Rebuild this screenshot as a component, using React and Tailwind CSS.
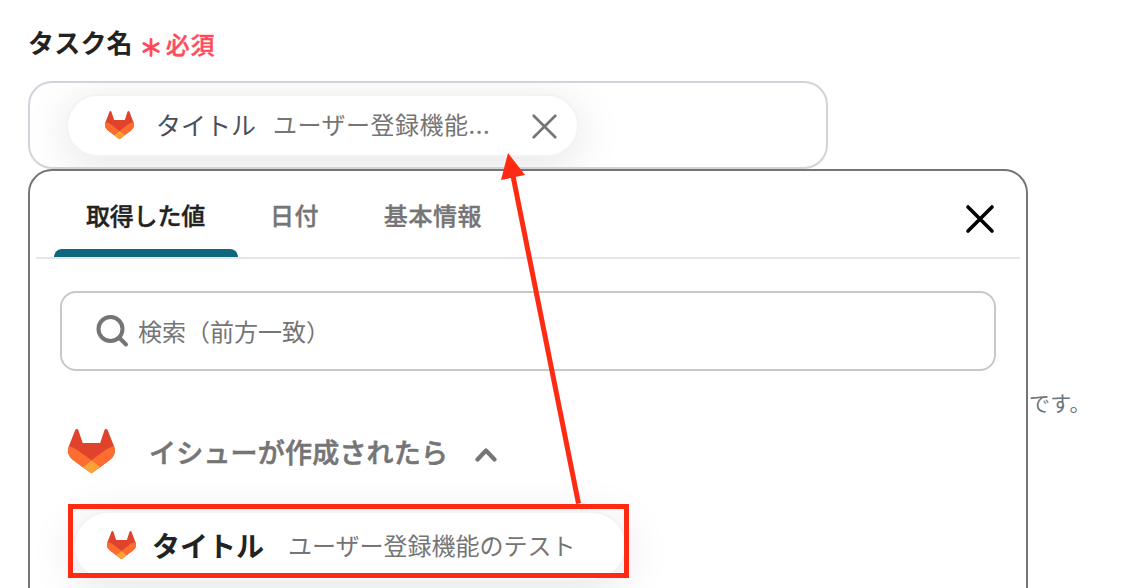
import { useState } from 'react';

const tabs = [
  { id: 'values', label: '取得した値', className: 'ml-[58px] tracking-[-0.2px]' },
  { id: 'date', label: '日付', className: 'ml-[65px] tracking-[0.4px]' },
  { id: 'basic', label: '基本情報', className: 'ml-[65px] tracking-[0.6px]' },
];

function GitlabLogo({ className }) {
  return (
    <svg className={className} viewBox="0 0 25 24" preserveAspectRatio="none" fill="none">
      <path fill="#E0432C" d="m24.507 9.5-.034-.09L21.082.562a.896.896 0 0 0-1.694.091l-2.29 7.01H7.825L5.535.653a.898.898 0 0 0-1.694-.09L.451 9.411.416 9.5a6.297 6.297 0 0 0 2.09 7.278l.012.01.03.022 5.16 3.867 2.56 1.935 1.554 1.176a1.051 1.051 0 0 0 1.268 0l1.555-1.176 2.56-1.935 5.197-3.89.014-.01A6.297 6.297 0 0 0 24.507 9.5Z" />
      <path fill="#FC6D2F" d="m24.507 9.5-.034-.09a11.44 11.44 0 0 0-4.56 2.051l-7.447 5.632 4.742 3.584 5.197-3.89.014-.01A6.297 6.297 0 0 0 24.507 9.5Z" />
      <path fill="#FBA336" d="m7.707 20.677 2.56 1.935 1.555 1.176a1.051 1.051 0 0 0 1.268 0l1.555-1.176 2.56-1.935-4.743-3.584-4.755 3.584Z" />
      <path fill="#FC6D2F" d="M5.01 11.461a11.43 11.43 0 0 0-4.56-2.05L.416 9.5a6.297 6.297 0 0 0 2.09 7.278l.012.01.03.022 5.16 3.867 4.745-3.584-7.444-5.632Z" />
    </svg>
  );
}

function CloseIcon({ className, strokeWidth }) {
  return (
    <svg className={className} viewBox="0 0 30 30" fill="none" stroke="currentColor" strokeWidth={strokeWidth} strokeLinecap="round">
      <path d="M3 3 27 27M27 3 3 27" />
    </svg>
  );
}

export default function App() {
  const [activeTab, setActiveTab] = useState('values');

  return (
    <div className="relative h-[588px] w-[1124px] overflow-hidden bg-white pl-7 font-['Noto_Sans_CJK_JP',sans-serif]">
      <div className="flex h-[81px] items-center pt-[4px]">
        <label className="-mt-px text-[26px] leading-[38px] font-bold tracking-[0.2px] text-[#222]">タスク名</label>
        <svg className="mt-[10px] ml-[9px] h-[19px] w-[18px]" viewBox="0 0 18 19" stroke="#ff4b5c" strokeWidth="2.8" strokeLinecap="round">
          <path d="M9 1.5v16M1.8 5.5l14.4 8M16.2 5.5l-14.4 8" />
        </svg>
        <span className="mt-[2px] ml-[6px] text-[24px] leading-[36px] font-medium tracking-[0.8px] text-[#ff4b5c] [-webkit-text-stroke:0.4px]">必須</span>
      </div>

      <div className="h-[88px] w-[800px] overflow-hidden rounded-[24px] border-2 border-[#ced4da] pt-[11px] pl-[36px]">
        <div className="flex h-[63px] w-[513px] items-center rounded-full border-2 border-[#f3f3f3] bg-white pl-[37px] shadow-[0_8px_48px_rgba(0,0,0,0.11)]">
          <GitlabLogo className="-mt-px h-[28px] w-[29px] shrink-0" />
          <span className="-mt-[3px] ml-[22px] text-[25px] leading-[38px] text-[#495057]">タイトル</span>
          <span className="-mt-[3px] ml-[17px] text-[24px] leading-[36px] tracking-[0.5px] text-[#757575]">ユーザー登録機能...</span>
          <button type="button" className="mt-px mr-[19px] ml-auto">
            <CloseIcon className="h-[27px] w-[27px] text-[#757575]" strokeWidth={3} />
          </button>
        </div>
      </div>

      <div className="flex">
        <div className="h-[460px] w-[1000px] shrink-0 rounded-t-[24px] border-2 border-[#757575] bg-white">
          <div className="mx-[6px] flex h-[88px] border-b-2 border-[#e5e5e5]">
            <div className="flex">
              {tabs.map((tab) => (
                <button
                  key={tab.id}
                  type="button"
                  onClick={() => setActiveTab(tab.id)}
                  className={`relative flex pt-[26px] text-[24px] leading-[36px] font-medium [-webkit-text-stroke:0.4px] first:ml-[50px] ${tab.className} ${
                    activeTab === tab.id ? 'text-[#222]' : 'text-[#757575]'
                  }`}
                >
                  {tab.label}
                  {activeTab === tab.id && (
                    <span className="absolute -right-[33px] bottom-0 -left-8 h-2 rounded-t-[8px] bg-[#0e6780]"></span>
                  )}
                </button>
              ))}
            </div>
            <button type="button" className="mt-[10px] mr-[25px] ml-auto">
              <CloseIcon className="h-[30px] w-[30px] text-black" strokeWidth={3.6} />
            </button>
          </div>

          <div className="mt-[32px] ml-[30px] flex h-[80px] w-[936px] items-center rounded-[16px] border-2 border-[#c8c8c8] pl-[34px]">
            <svg className="h-[34px] w-[34px]" viewBox="0 0 34 34" fill="none" stroke="#757575" strokeWidth="4" strokeLinecap="round">
              <circle cx="14.5" cy="15" r="12" />
              <path d="m23.5 24 6.5 6.5" />
            </svg>
            <span className="ml-[8px] text-[24px] leading-[36px] text-[#757575]">検索（前方一致）</span>
          </div>

          <div className="mt-[56px] ml-[38px] flex h-[48px] items-center">
            <GitlabLogo className="-mt-px h-[44px] w-[47px]" />
            <span className="mt-[2px] ml-[34px] text-[27px] leading-[40px] font-medium tracking-[0.2px] text-[#757575] [-webkit-text-stroke:0.6px]">イシューが作成されたら</span>
            <svg className="mt-[8px] ml-[27px] h-[16px] w-[22px]" viewBox="0 0 22 16" fill="none" stroke="#757575" strokeWidth="4.2" strokeLinecap="round" strokeLinejoin="round">
              <path d="m2.5 12.5 8.5-9 8.5 9" />
            </svg>
          </div>

          <div className="mt-[36px] ml-[43px] flex h-[70px] w-[554px] items-center rounded-full border-2 border-[#f3f3f3] bg-white pl-[32px] shadow-[0_8px_48px_rgba(0,0,0,0.11)]">
            <GitlabLogo className="-mt-[3px] h-[28px] w-[29px] shrink-0" />
            <span className="-mt-[3px] ml-[16px] text-[28px] leading-[40px] font-bold text-[#222]">タイトル</span>
            <span className="-mt-[3px] ml-[24px] text-[24px] leading-[36px] text-[#757575]">ユーザー登録機能のテスト</span>
          </div>
        </div>
        <p className="mt-[217px] ml-px text-[21px] leading-[32px] tracking-[0.3px] text-[#6c757d]">です。</p>
      </div>

      {/* annotation */}
      <div className="absolute top-[504px] left-[68px] h-[74px] w-[561px] border-5 border-[#ff2a12]"></div>
      <svg className="absolute top-[150px] left-[495px] h-[356px] w-[90px]" viewBox="495 150 90 356">
        <path d="M513 176 578.5 503.5" stroke="#ff2a12" strokeWidth="5" />
        <path d="M508 153 525 175 501 180Z" fill="#ff2a12" />
      </svg>
    </div>
  );
}
